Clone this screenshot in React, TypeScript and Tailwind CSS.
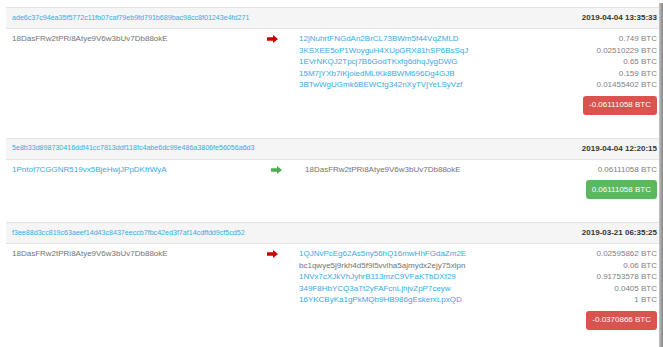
import React from 'react';

type Output = { address: string; amount: string; linked: boolean };

interface TxProps {
    hash: string;
    date: string;
    from: string;
    fromLinked: boolean;
    outputs: Output[];
    total: string;
    incoming: boolean;
    leftCol: string;
    arrowCol: string;
}

const ArrowIcon: React.FC<{ color: string }> = ({ color }) => (
    <svg width="11" height="8" viewBox="0 0 11 8" className="mt-[2px]">
        <polygon points="0,2.2 6,2.2 6,0 11,4 6,8 6,5.8 0,5.8" fill={color} />
    </svg>
);

const Transaction: React.FC<TxProps> = ({ hash, date, from, fromLinked, outputs, total, incoming, leftCol, arrowCol }) => {
    return (
        <div className="mb-[23px]">
            <div className="h-[22px] flex items-center justify-between bg-[#f5f5f5] border-t border-b border-[#e4e4e4] pl-[6px] pr-[6px]">
                <span className="text-[7.1px] text-[#35abe6]">{hash}</span>
                <span className="text-[8px] font-bold text-[#333]">{date}</span>
            </div>
            <div className="pt-[4px] pl-[6px] pr-[6px] text-[8px] leading-[11.5px]">
                <div className="flex">
                    <div className={leftCol}>
                        <span className={fromLinked ? 'text-[#35abe6]' : 'text-[#737373]'}>{from}</span>
                    </div>
                    <div className={arrowCol}>
                        <ArrowIcon color={incoming ? '#4cae4c' : '#cc0000'} />
                    </div>
                    <div className="flex-1">
                        {outputs.map((o, i) => (
                            <div key={i} className="flex justify-between">
                                <span className={o.linked ? 'text-[#35abe6]' : 'text-[#737373]'}>{o.address}</span>
                                <span className="text-[#808080]">{o.amount}</span>
                            </div>
                        ))}
                    </div>
                </div>
                <div className="flex justify-end mt-[5px]">
                    <span
                        className={
                            'h-[19px] px-[6px] flex items-center rounded-[3px] text-white text-[8px] ' +
                            (incoming ? 'bg-[#5cb85c]' : 'bg-[#d9534f]')
                        }
                    >
                        {total}
                    </span>
                </div>
            </div>
        </div>
    );
};

const App: React.FC = () => {
    return (
        <div className="relative w-[663px] h-[347px] overflow-hidden bg-white" style={{ fontFamily: '"Liberation Sans", Arial, sans-serif' }}>
            <div className="ml-[6px] mt-[7px]">
                <Transaction
                    hash="ade6c37c94ea35f5772c11fb07caf79eb9fd791b689bac98cc8f01243e4fd271"
                    date="2019-04-04 13:35:33"
                    from="18DasFRw2tPRi8Atye9V6w3bUv7Db88okE"
                    fromLinked={false}
                    outputs={[
                        { address: '12jNuhrtFNGdAn2BrCL73BWm5f44VqZMLD', amount: '0.749 BTC', linked: true },
                        { address: '3KSXEE5oP1WoyguH4XUpGRX81hSP6BsSqJ', amount: '0.02510229 BTC', linked: true },
                        { address: '1EVrNKQJ2Tpcj7B6GodTKxfg6dhqJygDWG', amount: '0.65 BTC', linked: true },
                        { address: '15M7jYXb7iKjoiedMLtKk8BWM696Dg4GJB', amount: '0.159 BTC', linked: true },
                        { address: '3BTwWgUGmk6BEWCtg342nXyTVjYeLSyVzf', amount: '0.01455402 BTC', linked: true },
                    ]}
                    total="-0.06111058 BTC"
                    incoming={false}
                    leftCol="w-[255px]"
                    arrowCol="w-[32px]"
                />
                <Transaction
                    hash="5e8b33d898730416ddf41cc7813ddf118fc4abe6dc99e486a3806fe56056a6d3"
                    date="2019-04-04 12:20:15"
                    from="1Pntof7CGGNR519vx5BjeHwjJPpDKfrWyA"
                    fromLinked={true}
                    outputs={[
                        { address: '18DasFRw2tPRi8Atye9V6w3bUv7Db88okE', amount: '0.06111058 BTC', linked: false },
                    ]}
                    total="0.06111058 BTC"
                    incoming={true}
                    leftCol="w-[259px]"
                    arrowCol="w-[34px]"
                />
                <Transaction
                    hash="f3ee88d3cc819c63aeef14d43c8437eeccb7fbc42ed3f7af14cdffdd9cf5cd52"
                    date="2019-03-21 06:35:25"
                    from="18DasFRw2tPRi8Atye9V6w3bUv7Db88okE"
                    fromLinked={false}
                    outputs={[
                        { address: '1QJNvPcEg62As5ny56hQ16mwHhFGdaZm2E', amount: '0.02595862 BTC', linked: true },
                        { address: 'bc1qwye5j9rkh4d5f9l5vvlha5ajmydx2ejy75xlpn', amount: '0.06 BTC', linked: false },
                        { address: '1NVx7cXJkVhJyhrB113mzC9VFaKTbDXf29', amount: '0.91753578 BTC', linked: true },
                        { address: '349F8HbYCQ3aTt2yFAFcnLjhjvZpP7ceyw', amount: '0.0405 BTC', linked: true },
                        { address: '16YKCByKa1gPkMQb9HB986gEskerxLpxQD', amount: '1 BTC', linked: true },
                    ]}
                    total="-0.0370866 BTC"
                    incoming={false}
                    leftCol="w-[255px]"
                    arrowCol="w-[32px]"
                />
            </div>
            {/* window edge shadow on the right */}
            <div className="absolute right-0 top-[3px] bottom-0 w-[4px] bg-gradient-to-r from-[#c4c4c4] to-[#858585]" />
        </div>
    );
};

export default App;
